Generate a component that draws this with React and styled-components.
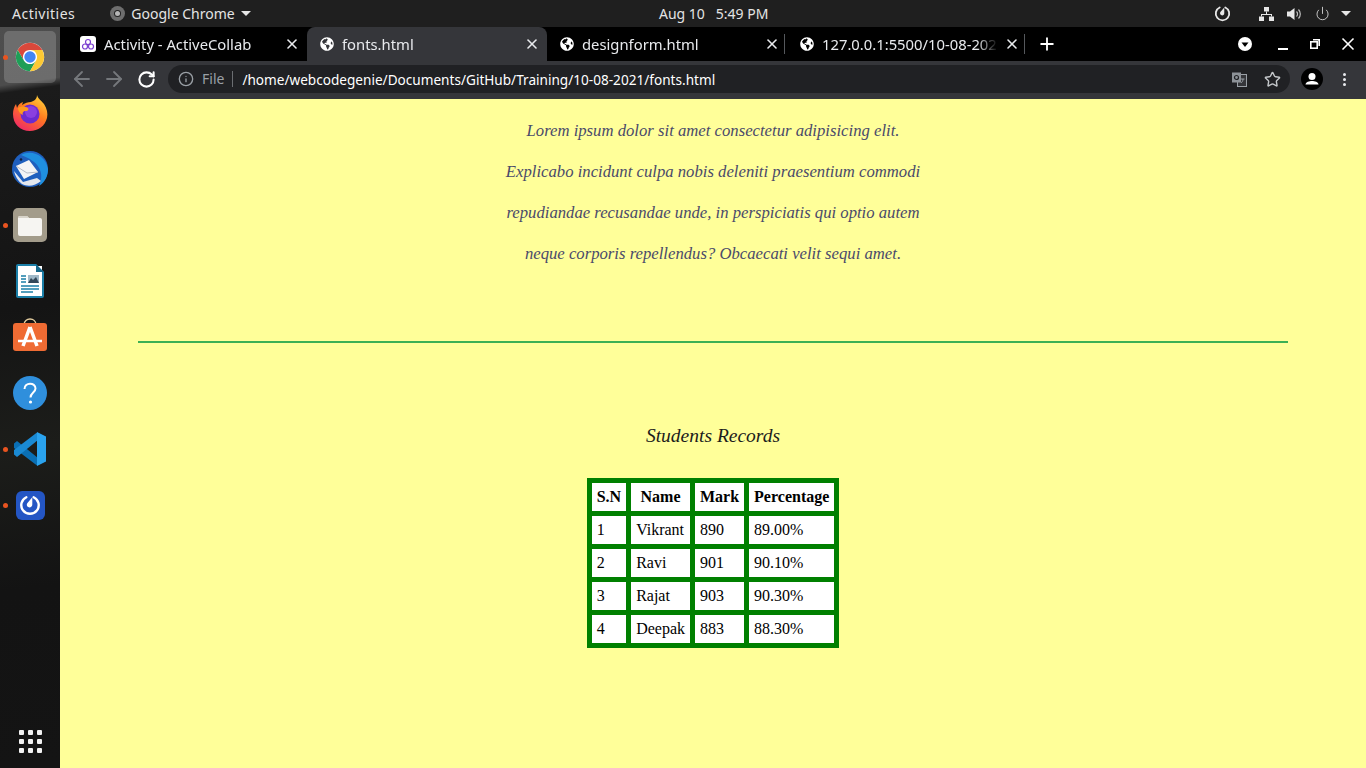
import styled, { createGlobalStyle } from 'styled-components';
import { FaGlobeAmericas } from 'react-icons/fa';
import { ArrowLeft, ArrowRight, RotateCw, Info, Star, Power, X, Plus } from 'lucide-react';

const UI_FONT = `'Noto Sans', 'Open Sans', sans-serif`;

const STUDENTS = [
  { id: 1, name: 'Vikrant', mark: 890, percentage: '89.00%' },
  { id: 2, name: 'Ravi', mark: 901, percentage: '90.10%' },
  { id: 3, name: 'Rajat', mark: 903, percentage: '90.30%' },
  { id: 4, name: 'Deepak', mark: 883, percentage: '88.30%' },
];

const TABS = [
  { title: 'Activity - ActiveCollab', favicon: 'collab' },
  { title: 'fonts.html', active: true },
  { title: 'designform.html', divider: true },
  { title: '127.0.0.1:5500/10-08-2021/', divider: true },
];

function ChromeLogo({ size = 34 }) {
  return (
    <svg width={size} height={size} viewBox="0 0 48 48">
      <circle cx="24" cy="24" r="20" fill="#fff" />
      <path d="M24 14h17.32A20 20 0 0 0 6.68 14l8.66 15A10 10 0 0 1 24 14z" fill="#d9483b" />
      <path d="M15.34 29 6.68 14A20 20 0 0 0 24 44l8.66-15a10 10 0 0 1-17.32 0z" fill="#1e9e57" />
      <path d="M32.66 29 24 44a20 20 0 0 0 17.32-30H24a10 10 0 0 1 8.66 15z" fill="#fcc934" />
      <circle cx="24" cy="24" r="8" fill="#4285f4" />
    </svg>
  );
}

function FirefoxLogo() {
  return (
    <svg width="36" height="38" viewBox="0 0 36 38">
      <defs>
        <linearGradient id="fox" x1="0.8" y1="0" x2="0.2" y2="1">
          <stop offset="0" stopColor="#ffd43a" />
          <stop offset="0.45" stopColor="#ff7a1f" />
          <stop offset="1" stopColor="#f0246b" />
        </linearGradient>
      </defs>
      <path d="M25 1c1 4 4 5 7 9 3 5 4 9 3 14-2 8-9 13-17 13C8 37 1 30 1 20c0-4 1-7 3-10l1 4c1-3 3-5 6-6l-1 3c3-2 6-3 9-3 3-1 6-3 6-7z" fill="url(#fox)" />
      <circle cx="18" cy="20" r="9.5" fill="#6b2bd0" />
      <circle cx="19" cy="18" r="6" fill="#8a3fe0" />
      <path d="M6 14c3-2 7-2 10 0 1 1 0 3-2 3-3 0-4 2-3 4-3-1-5-4-5-7z" fill="#ff9a1f" />
    </svg>
  );
}

function ThunderbirdLogo() {
  return (
    <svg width="36" height="36" viewBox="0 0 36 36">
      <circle cx="18" cy="18" r="18" fill="#1f5fbe" />
      <path d="M9 4C20-2 34 5 36 18c0 7-3 13-9 17 3-7 3-13 0-18C24 11 17 7 9 4z" fill="#1f8fe0" />
      <path d="M4 15 17 9l9 12-14 7-8-13z" fill="#f4f4f6" />
      <path d="M2 20l9 11 14-4 4 3c-6 5-13 6-19 3-4-3-7-8-8-13z" fill="#e4e7ee" />
      <path d="M4 15l11 7 11-1" fill="none" stroke="#b8bdc8" strokeWidth="1" />
      <circle cx="9" cy="8.500" r="1.300" fill="#10203f" />
    </svg>
  );
}

function FilesLogo() {
  return (
    <svg width="34" height="34" viewBox="0 0 34 34">
      <rect width="34" height="34" rx="5" fill="#a39c8b" />
      <path d="M5 10a2 2 0 0 1 2-2h7l2 2h11a2 2 0 0 1 2 2v14a2 2 0 0 1-2 2H7a2 2 0 0 1-2-2z" fill="#f6f5f2" />
      <path d="M5 10a2 2 0 0 1 2-2h7l2 2z" fill="#d8d4ca" />
    </svg>
  );
}

function WriterLogo() {
  return (
    <svg width="28" height="34" viewBox="0 0 28 34">
      <path d="M2 0h18l8 8v24a2 2 0 0 1-2 2H2a2 2 0 0 1-2-2V2a2 2 0 0 1 2-2z" fill="#1b7fa8" />
      <rect x="2" y="2" width="24" height="30" fill="#fff" />
      <path d="M20 0l8 8h-8z" fill="#14688c" />
      <rect x="12" y="11" width="11" height="8" fill="#9fb8c8" />
      <path d="M12 19l3-5 2 2 3-3 3 6z" fill="#33485a" />
      <path d="M5 12h5M5 15h5M5 18h5M5 22h18M5 25h18M5 28h12" stroke="#1b7fa8" strokeWidth="1.6" />
    </svg>
  );
}

function SoftwareLogo() {
  return (
    <svg width="34" height="38" viewBox="0 0 34 38">
      <path d="M11 7c0-8 12-8 12 0" fill="none" stroke="#e6cfa0" strokeWidth="1.4" />
      <rect y="5" width="34" height="28" rx="3" fill="#ef6b33" />
      <path d="M17 9 10 28M17 9l7 19" stroke="#fff" strokeWidth="3.500" fill="none" />
      <path d="M5 23h24" stroke="#fff" strokeWidth="2.500" />
    </svg>
  );
}

function HelpLogo() {
  return (
    <svg width="34" height="34" viewBox="0 0 34 34">
      <circle cx="17" cy="17" r="17" fill="#2f8fdc" />
      <path d="M11.500 13c0-7 11-7 11-.5 0 4-5 4-5 9" fill="none" stroke="#fff" strokeWidth="2" />
      <circle cx="17.500" cy="26" r="1.600" fill="#fff" />
    </svg>
  );
}

function VscodeLogo() {
  return (
    <svg width="34" height="34" viewBox="0 0 34 34">
      <path d="M1 11.500 4 9l21 17-1 7.500L1 16z" fill="#0a6fb4" />
      <path d="M1 22.500 4 25 25 8l-1-7.500L1 18z" fill="#1a8ad4" />
      <path d="M24 0l9 4.500v25L24 34z" fill="#2aa3ee" />
    </svg>
  );
}

function MattermostMark({ size, color }) {
  return (
    <svg width={size} height={size} viewBox="0 0 24 24">
      <path d="M8 3.500a9.500 9.500 0 1 0 8 0" fill="none" stroke={color} strokeWidth="2.600" strokeLinecap="round" />
      <path d="M14.500 3.500v8a3 3 0 1 1-5.500-1.500z" fill={color} />
    </svg>
  );
}

function CollabFavicon() {
  return (
    <svg width="16" height="16" viewBox="0 0 16 16">
      <rect width="16" height="16" rx="3" fill="#fff" />
      <g fill="none" stroke="#7b3fd0" strokeWidth="1.200">
        <circle cx="8" cy="6" r="2.500" />
        <circle cx="5" cy="10.500" r="2.500" />
        <circle cx="11" cy="10.500" r="2.500" />
      </g>
    </svg>
  );
}

function NetworkIcon() {
  return (
    <svg width="15" height="14" viewBox="0 0 15 14" fill="#e6e6e6">
      <rect x="5" y="0" width="5" height="4.500" />
      <rect x="0" y="9.500" width="5" height="4.500" />
      <rect x="10" y="9.500" width="5" height="4.500" />
      <path d="M7 4.500h1V7h5v2.500h-1V8H3v1.500H2V7h5z" />
    </svg>
  );
}

function VolumeIcon() {
  return (
    <svg width="15" height="14" viewBox="0 0 15 14">
      <path d="M0 4.500h3L7.500 1v12L3 9.500H0z" fill="#e6e6e6" />
      <path d="M9.500 4.500a3.500 3.500 0 0 1 0 5M11.500 2.500a6.500 6.500 0 0 1 0 9" fill="none" stroke="#bdbdbd" strokeWidth="1.200" />
    </svg>
  );
}

function TranslateIcon() {
  return (
    <svg width="15" height="15" viewBox="0 0 15 15">
      <rect x="5.500" y="2.500" width="9" height="12" fill="#35363a" stroke="#9aa0a6" />
      <rect x="0" y="0.500" width="9" height="10" fill="#8d9298" />
      <circle cx="4.500" cy="5.500" r="2" fill="none" stroke="#202124" strokeWidth="1.200" />
      <path d="M9 7h3.500M11 7c0 2-1 3-2 4" fill="none" stroke="#9aa0a6" />
    </svg>
  );
}

function AvatarIcon() {
  return (
    <svg width="22" height="22" viewBox="0 0 22 22">
      <circle cx="11" cy="11" r="11" fill="#000" />
      <circle cx="11" cy="8.500" r="3.500" fill="#fff" />
      <path d="M4.500 16.500c0-2.500 4-3.500 6.500-3.500s6.500 1 6.500 3.500z" fill="#fff" />
    </svg>
  );
}

function ProfileDropdownIcon() {
  return (
    <svg width="14" height="14" viewBox="0 0 14 14">
      <circle cx="7" cy="7" r="7" fill="#fff" />
      <path d="M3.500 5.500h7L7 10z" fill="#000" />
    </svg>
  );
}

function WindowRestoreIcon() {
  return (
    <svg width="10" height="10" viewBox="0 0 10 10" fill="none" stroke="#fff" strokeWidth="1.600">
      <rect x="0.800" y="2.800" width="6.400" height="6.400" />
      <path d="M3 0.800h6.200V7" />
    </svg>
  );
}

function ChromeGrey() {
  return (
    <svg width="15" height="15" viewBox="0 0 15 15">
      <circle cx="7.500" cy="7.500" r="7.500" fill="#6e6e6e" />
      <circle cx="7.500" cy="7.500" r="3.500" fill="#222" />
      <circle cx="7.500" cy="7.500" r="2.500" fill="#b5b5b5" />
    </svg>
  );
}

function Tab({ title, favicon, active, divider }) {
  return (
    <TabItem $active={active}>
      {favicon === 'collab' ? <CollabFavicon /> : <FaGlobeAmericas size={14} color="#fff" />}
      <TabTitle>{title}</TabTitle>
      <TabClose>
        <X size={16} strokeWidth={2.400} />
      </TabClose>
      {divider && <TabDivider />}
    </TabItem>
  );
}

export default function App() {
  return (
    <>
      <GlobalStyle />
      <Desktop>
        <TopBar>
          <TopBarLeft>
            <Activities>Activities</Activities>
            <AppMenu>
              <AppMenuIcon>
                <ChromeGrey />
              </AppMenuIcon>
              Google Chrome
              <Caret $gap={6} />
            </AppMenu>
          </TopBarLeft>
          <Clock>Aug 10 &nbsp; 5:49 PM</Clock>
          <TopBarRight>
            <MattermostMark size={17} color="#e8e8e8" />
            <StatusIcons>
              <NetworkIcon />
              <VolumeIcon />
              <Power size={15} strokeWidth={1.300} color="#e6e6e6" />
              <Caret $gap={-2} />
            </StatusIcons>
          </TopBarRight>
        </TopBar>

        <Workspace>
          <Dock>
            <DockSlot $active $running>
              <ChromeLogo />
            </DockSlot>
            <DockSlot>
              <FirefoxLogo />
            </DockSlot>
            <DockSlot>
              <ThunderbirdLogo />
            </DockSlot>
            <DockSlot $running>
              <FilesLogo />
            </DockSlot>
            <DockSlot>
              <WriterLogo />
            </DockSlot>
            <DockSlot>
              <SoftwareLogo />
            </DockSlot>
            <DockSlot>
              <HelpLogo />
            </DockSlot>
            <DockSlot $running>
              <VscodeLogo />
            </DockSlot>
            <DockSlot $running>
              <MattermostTile>
                <MattermostMark size={22} color="#fff" />
              </MattermostTile>
            </DockSlot>
            <AppsGrid>
              {Array.from({ length: 9 }, (_, i) => (
                <i key={i} />
              ))}
            </AppsGrid>
          </Dock>

          <Browser>
            <TabStrip>
              {TABS.map((tab) => (
                <Tab key={tab.title} {...tab} />
              ))}
              <NewTab>
                <Plus size={20} strokeWidth={2.200} />
              </NewTab>
              <WindowControls>
                <ProfileDropdownIcon />
                <MinimizeBar />
                <WindowRestoreIcon />
                <WindowClose>
                  <X size={20} strokeWidth={2} />
                </WindowClose>
              </WindowControls>
            </TabStrip>

            <Toolbar>
              <NavButton>
                <ArrowLeft size={24} strokeWidth={1.800} color="#75787c" />
              </NavButton>
              <NavButton>
                <ArrowRight size={24} strokeWidth={1.800} color="#75787c" />
              </NavButton>
              <NavButton>
                <RotateCw size={19} strokeWidth={2.600} color="#fff" />
              </NavButton>
              <Omnibox>
                <Info size={16} color="#9aa0a6" />
                <FileLabel>File</FileLabel>
                <Url>/home/webcodegenie/Documents/GitHub/Training/10-08-2021/fonts.html</Url>
                <OmniboxActions>
                  <TranslateIcon />
                  <Star size={17} color="#c4c7ca" />
                </OmniboxActions>
              </Omnibox>
              <AvatarIcon />
              <Kebab>
                <i />
                <i />
                <i />
              </Kebab>
            </Toolbar>

            <Page>
              <Intro>
                Lorem ipsum dolor sit amet consectetur adipisicing elit.
                <br />
                Explicabo incidunt culpa nobis deleniti praesentium commodi
                <br />
                repudiandae recusandae unde, in perspiciatis qui optio autem
                <br />
                neque corporis repellendus? Obcaecati velit sequi amet.
              </Intro>
              <Rule />
              <TableTitle>Students Records</TableTitle>
              <RecordsTable>
                <thead>
                  <tr>
                    <th>S.N</th>
                    <th>Name</th>
                    <th>Mark</th>
                    <th>Percentage</th>
                  </tr>
                </thead>
                <tbody>
                  {STUDENTS.map((student) => (
                    <tr key={student.id}>
                      <td>{student.id}</td>
                      <td>{student.name}</td>
                      <td>{student.mark}</td>
                      <td>{student.percentage}</td>
                    </tr>
                  ))}
                </tbody>
              </RecordsTable>
            </Page>
          </Browser>
        </Workspace>
      </Desktop>
    </>
  );
}

const GlobalStyle = createGlobalStyle`
  html, body {
    margin: 0;
    padding: 0;
    overflow: hidden;
  }

  * {
    box-sizing: border-box;
  }
`;

const Desktop = styled.div`
  width: 1366px;
  height: 768px;
  display: flex;
  flex-direction: column;
  font-family: ${UI_FONT};
  overflow: hidden;
`;

const TopBar = styled.header`
  height: 27px;
  flex: none;
  padding: 0 15px 0 12px;
  background-color: #1f1f1f;
  color: #e4e4e4;
  font-size: 14px;
  display: grid;
  grid-template-columns: 647px auto 1fr;
  align-items: center;
`;

const TopBarLeft = styled.div`
  display: flex;
  align-items: center;
  gap: 35px;
`;

const Activities = styled.span`
  letter-spacing: 0.5px;
`;

const AppMenu = styled.div`
  display: flex;
  align-items: center;
`;

const AppMenuIcon = styled.span`
  display: flex;
  margin-right: 6px;
`;

const Caret = styled.span`
  width: 0;
  height: 0;
  margin-left: ${({ $gap }) => $gap}px;
  border-left: 5px solid transparent;
  border-right: 5px solid transparent;
  border-top: 5px solid #e6e6e6;
`;

const Clock = styled.div`
  text-align: center;
`;

const TopBarRight = styled.div`
  display: flex;
  align-items: center;
  justify-content: flex-end;
  gap: 28px;
`;

const StatusIcons = styled.div`
  display: flex;
  align-items: center;
  gap: 13px;
`;

const Workspace = styled.div`
  flex: 1;
  display: flex;
  min-height: 0;
`;

const Dock = styled.nav`
  width: 60px;
  flex: none;
  padding: 3px 0 15px;
  background:
    linear-gradient(172deg, #4e4e4e 0, #4c4c4c 58px, #1b1b1b 66px, #141414 280px, #1c1d1a 420px, #131313 560px, #141414 100%);
  display: flex;
  flex-direction: column;
  align-items: center;
`;

const DockSlot = styled.div`
  width: 52px;
  height: 52px;
  margin: 1px 0 3px;
  border-radius: 5px;
  background-color: ${({ $active }) => ($active ? 'rgba(255, 255, 255, 0.18)' : 'transparent')};
  display: flex;
  align-items: center;
  justify-content: center;
  position: relative;

  &::before {
    content: '';
    display: ${({ $running }) => ($running ? 'block' : 'none')};
    width: 5px;
    height: 5px;
    border-radius: 50%;
    background-color: #e95420;
    position: absolute;
    left: -1px;
    top: 24px;
  }
`;

const MattermostTile = styled.div`
  width: 29px;
  height: 29px;
  border-radius: 6px;
  background-color: #2456c4;
  display: flex;
  align-items: center;
  justify-content: center;
`;

const AppsGrid = styled.div`
  margin-top: auto;
  display: grid;
  grid-template-columns: repeat(3, 5px);
  gap: 4px;

  i {
    height: 5px;
    border-radius: 1px;
    background-color: #f2f2f2;
  }
`;

const Browser = styled.main`
  flex: 1;
  min-width: 0;
  display: flex;
  flex-direction: column;
`;

const TabStrip = styled.div`
  height: 34px;
  flex: none;
  padding-left: 7px;
  background-color: #000;
  display: flex;
  align-items: stretch;
`;

const TabItem = styled.div`
  width: 240px;
  padding: 0 7px 0 13px;
  border-radius: 8px 8px 0 0;
  background-color: ${({ $active }) => ($active ? '#35363a' : 'transparent')};
  color: #e8eaed;
  font-size: 14.8px;
  display: flex;
  align-items: center;
  position: relative;
`;

const TabTitle = styled.span`
  flex: 1;
  min-width: 0;
  margin-left: 8px;
  overflow: hidden;
  white-space: nowrap;
  mask-image: linear-gradient(90deg, #000 88%, transparent);
`;

const TabClose = styled.span`
  width: 16px;
  margin-left: 6px;
  display: flex;
  color: #e8eaed;
`;

const TabDivider = styled.span`
  width: 1px;
  height: 20px;
  background-color: #55585c;
  position: absolute;
  right: 2px;
  top: 7px;
`;

const NewTab = styled.div`
  width: 20px;
  margin-left: 10px;
  display: flex;
  align-items: center;
  color: #fff;
`;

const WindowControls = styled.div`
  margin-left: auto;
  padding-right: 8px;
  color: #fff;
  display: flex;
  align-items: center;
  gap: 22px;
`;

const MinimizeBar = styled.span`
  width: 10px;
  height: 2px;
  margin: 10px 0 0 4px;
  background-color: #fff;
`;

const WindowClose = styled.span`
  margin-left: -4px;
  display: flex;
`;

const Toolbar = styled.div`
  height: 38px;
  flex: none;
  padding: 4px 0 6px 6px;
  background-color: #35363a;
  display: flex;
  align-items: center;
`;

const NavButton = styled.div`
  width: 32px;
  display: flex;
  align-items: center;
  justify-content: center;
`;

const Omnibox = styled.div`
  width: 1122px;
  height: 28px;
  margin: 0 11px 0 6px;
  padding: 0 9px 0 10px;
  border-radius: 14px;
  background-color: #202124;
  font-size: 13.6px;
  display: flex;
  align-items: center;
`;

const FileLabel = styled.span`
  margin-left: 8px;
  padding-right: 8px;
  border-right: 1px solid #6b6e72;
  font-size: 14px;
  line-height: 16px;
  color: #9aa0a6;
`;

const Url = styled.span`
  margin-left: 9px;
  color: #fff;
  white-space: nowrap;
`;

const OmniboxActions = styled.div`
  margin-left: auto;
  display: flex;
  align-items: center;
  gap: 17px;
  color: #c4c7ca;
`;

const Kebab = styled.div`
  margin-left: 20px;
  display: flex;
  flex-direction: column;
  gap: 2px;

  i {
    width: 3px;
    height: 3px;
    border-radius: 50%;
    background-color: #e8eaed;
  }
`;

const Page = styled.section`
  flex: 1;
  padding-top: 11px;
  background-color: #ffff99;
  display: flex;
  flex-direction: column;
  align-items: center;
`;

const Intro = styled.p`
  margin: 0;
  font-family: 'Liberation Serif', serif;
  font-style: italic;
  font-size: 16.7px;
  line-height: 41px;
  color: #4a4a6a;
  text-align: center;
`;

const Rule = styled.hr`
  width: 1150px;
  height: 2px;
  margin: 67px 0 0;
  border: 0;
  background-color: #3cb054;
`;

const TableTitle = styled.h2`
  margin: 80px 0 29px;
  font-family: 'Liberation Serif', serif;
  font-style: italic;
  font-weight: 400;
  font-size: 19.5px;
  line-height: 26px;
  color: #1c1c1c;
`;

const RecordsTable = styled.table`
  border-collapse: separate;
  border-spacing: 5px;
  background-color: #008000;
  font-family: 'Liberation Serif', serif;
  font-size: 16px;
  line-height: 18px;
  color: #000;

  th, td {
    padding: 5px;
    background-color: #fff;
    text-align: left;
  }

  th {
    text-align: center;
  }
`;
